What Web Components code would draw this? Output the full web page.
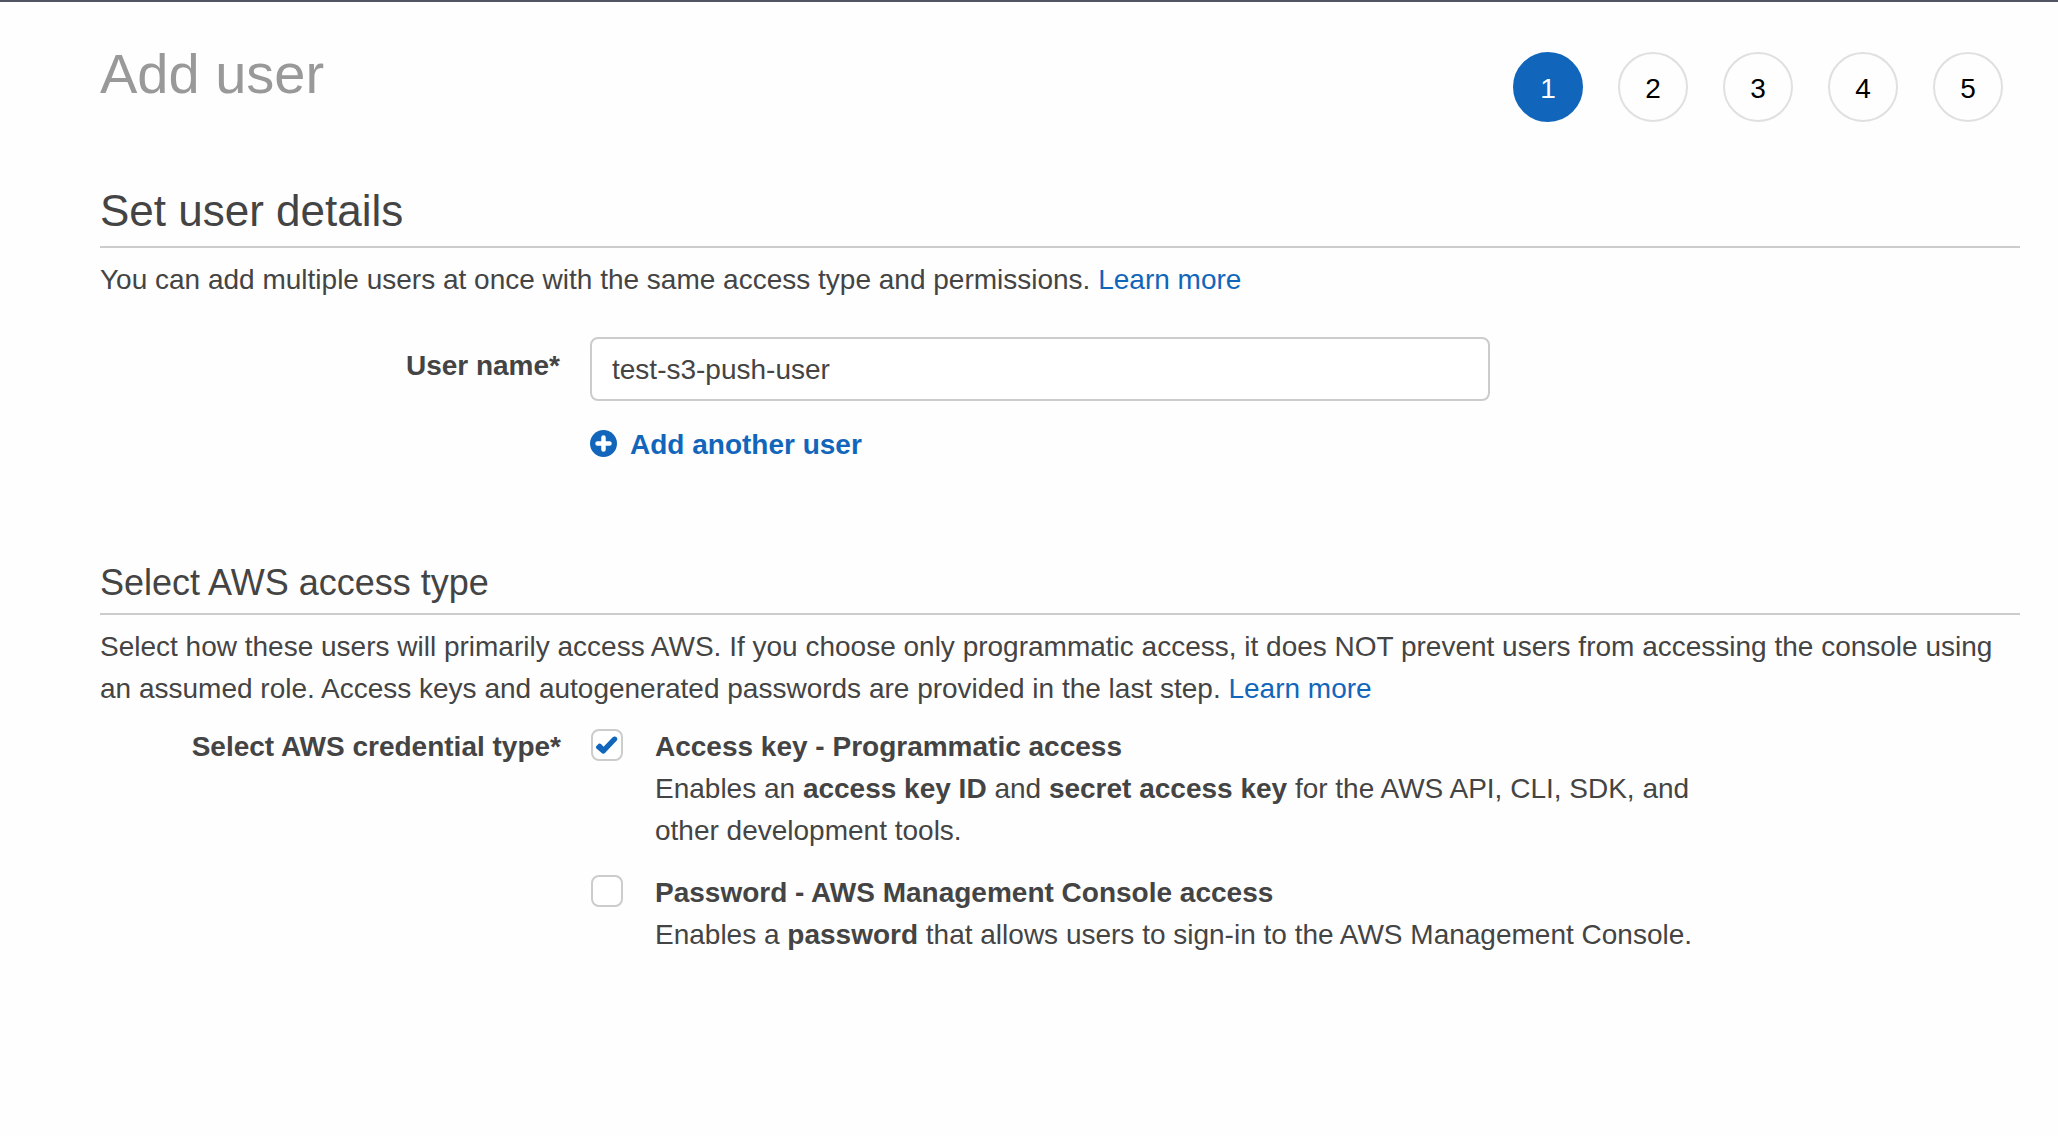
<!DOCTYPE html>
<html lang="en">
<head>
<meta charset="utf-8">
<title>Add user</title>
<style>
  body {
    margin: 0;
    background: #fefefe;
    color: #444;
    font: 28px/42px "Liberation Sans", Arial, sans-serif;
    --blue: #1166bb;
    --line: #ccc;
  }
  a { color: var(--blue); text-decoration: none; }
  a:hover { text-decoration: underline; }
</style>
</head>
<body>
<wizard-page>
  <wizard-steps slot="steps" total="5" current="1"></wizard-steps>
  <span slot="title">Add user</span>

  <form-section level="2">
    <span slot="heading">Set user details</span>
    <span slot="intro">You can add multiple users at once with the same access type and permissions. <a href="#users">Learn more</a></span>
    <user-name-field value="test-s3-push-user"></user-name-field>
  </form-section>

  <form-section level="3">
    <span slot="heading">Select AWS access type</span>
    <span slot="intro">Select how these users will primarily access AWS. If you choose only programmatic access, it does NOT prevent users from accessing the console using an assumed role. Access keys and autogenerated passwords are provided in the last step. <a href="#access">Learn more</a></span>
    <option-group label="Select AWS credential type*">
      <check-option checked>
        <span slot="label">Access key - Programmatic access</span>
        Enables an <b>access key ID</b> and <b>secret access key</b> for the AWS API, CLI, SDK, and other development tools.
      </check-option>
      <check-option>
        <span slot="label">Password - AWS Management Console access</span>
        Enables a <b>password</b> that allows users to sign-in to the AWS Management Console.
      </check-option>
    </option-group>
  </form-section>
</wizard-page>

<script>
  class BaseElement extends HTMLElement {
    connectedCallback() {
      if (this.shadowRoot) return;
      this.attachShadow({ mode: "open" }).innerHTML = this.render();
    }
  }

  customElements.define("wizard-page", class extends BaseElement {
    render() {
      return `
        <style>
          :host { display: block; border-top: 2px solid #545563; }
          main { padding: 40px 38px 40px 100px; }
          header { display: flex; justify-content: space-between; align-items: flex-start; padding-bottom: 62px; }
          h1 { margin: 0; font-size: 56px; line-height: 64px; font-weight: 400; color: #999; }
          ::slotted(wizard-steps) { margin: 10px 17px 0 0; }
          .sections { display: flex; flex-direction: column; gap: 95px; }
        </style>
        <main>
          <header><h1><slot name="title"></slot></h1><slot name="steps"></slot></header>
          <div class="sections"><slot></slot></div>
        </main>`;
    }
  });

  customElements.define("wizard-steps", class extends BaseElement {
    render() {
      const total = Number(this.getAttribute("total"));
      const current = Number(this.getAttribute("current"));
      const items = Array.from({ length: total }, (_, i) =>
        `<li${i + 1 === current ? ' aria-current="step"' : ""}>${i + 1}</li>`).join("");
      return `
        <style>
          :host { display: block; }
          ol { display: flex; gap: 35px; margin: 0; padding: 0; list-style: none; }
          li {
            box-sizing: border-box; width: 70px; height: 70px; padding-top: 4px;
            display: flex; align-items: center; justify-content: center;
            border: 2px solid #e0e0e0; border-radius: 50%; color: #000;
          }
          li[aria-current] { background: var(--blue); border-color: var(--blue); color: #fff; }
        </style>
        <ol>${items}</ol>`;
    }
  });

  customElements.define("form-section", class extends BaseElement {
    render() {
      const tag = "h" + this.getAttribute("level");
      return `
        <style>
          :host { display: block; }
          h2, h3 { margin: 0; padding-bottom: 8px; border-bottom: 2px solid var(--line); font-weight: 400; }
          h2 { font-size: 44px; line-height: 54px; }
          h3 { font-size: 36px; line-height: 44px; }
          p { margin: 11px 0 0; }
        </style>
        <${tag}><slot name="heading"></slot></${tag}>
        <p><slot name="intro"></slot></p>
        <slot></slot>`;
    }
  });

  customElements.define("user-name-field", class extends BaseElement {
    render() {
      return `
        <style>
          :host { display: grid; grid-template-columns: 460px minmax(0, 900px); column-gap: 30px; margin-top: 36px; }
          label { padding-top: 8px; text-align: right; font-weight: 700; }
          .controls { display: flex; flex-direction: column; align-items: flex-start; gap: 23px; }
          input {
            box-sizing: border-box; width: 100%; height: 64px; padding: 2px 20px 0;
            border: 2px solid var(--line); border-radius: 8px;
            background: #fff; color: inherit; font: inherit;
          }
          button {
            display: flex; align-items: center; gap: 13px; padding: 0;
            border: 0; background: none; color: var(--blue); font: inherit; font-weight: 700; cursor: pointer;
          }
          svg { width: 27px; height: 27px; margin-bottom: 4px; }
        </style>
        <label for="name">User name*</label>
        <div class="controls">
          <input id="name" type="text" value="${this.getAttribute("value")}">
          <button type="button">
            <svg viewBox="0 0 27 27" aria-hidden="true">
              <circle cx="13.5" cy="13.5" r="13.5" fill="currentColor"/>
              <path d="M13.5 7.5v12M7.5 13.5h12" stroke="#fff" stroke-width="4.5" stroke-linecap="round"/>
            </svg>
            Add another user
          </button>
        </div>`;
    }
  });

  customElements.define("option-group", class extends BaseElement {
    render() {
      return `
        <style>
          :host { display: block; margin-top: 16px; }
          .group { display: grid; grid-template-columns: 461px minmax(0, 1135px); column-gap: 30px; }
          .name { text-align: right; font-weight: 700; }
          .options { display: flex; flex-direction: column; gap: 20px; }
        </style>
        <div class="group" role="group" aria-labelledby="name">
          <div class="name" id="name">${this.getAttribute("label")}</div>
          <div class="options"><slot></slot></div>
        </div>`;
    }
  });

  customElements.define("check-option", class extends BaseElement {
    render() {
      return `
        <style>
          :host { display: grid; grid-template-columns: 32px minmax(0, 1fr); column-gap: 32px; }
          .box { display: grid; width: 32px; height: 32px; margin-top: 3px; }
          .box > * { grid-area: 1 / 1; }
          input {
            appearance: none; width: 32px; height: 32px; margin: 0;
            border: 2px solid var(--line); border-radius: 8px; background: #fff;
          }
          svg { width: 32px; height: 32px; visibility: hidden; pointer-events: none; }
          input:checked + svg { visibility: visible; }
          label { display: block; font-weight: 700; }
        </style>
        <div class="box">
          <input id="box" type="checkbox" ${this.hasAttribute("checked") ? "checked" : ""}>
          <svg viewBox="0 0 32 32" aria-hidden="true">
            <path d="M5.2 17.2l2.4-2.4q1.2-.9 2.4.2l2.6 2.7 8.8-9.2q2.2-1.6 4.2-.3 1.4 1.3 .4 3.1L14.200 23.800q-1.900 1.900-3.800 0L5.400 19.400q-.9-1.200-.2-2.200z" fill="var(--blue)"/>
          </svg>
        </div>
        <div>
          <label for="box"><slot name="label"></slot></label>
          <div><slot></slot></div>
        </div>`;
    }
  });
</script>
</body>
</html>
